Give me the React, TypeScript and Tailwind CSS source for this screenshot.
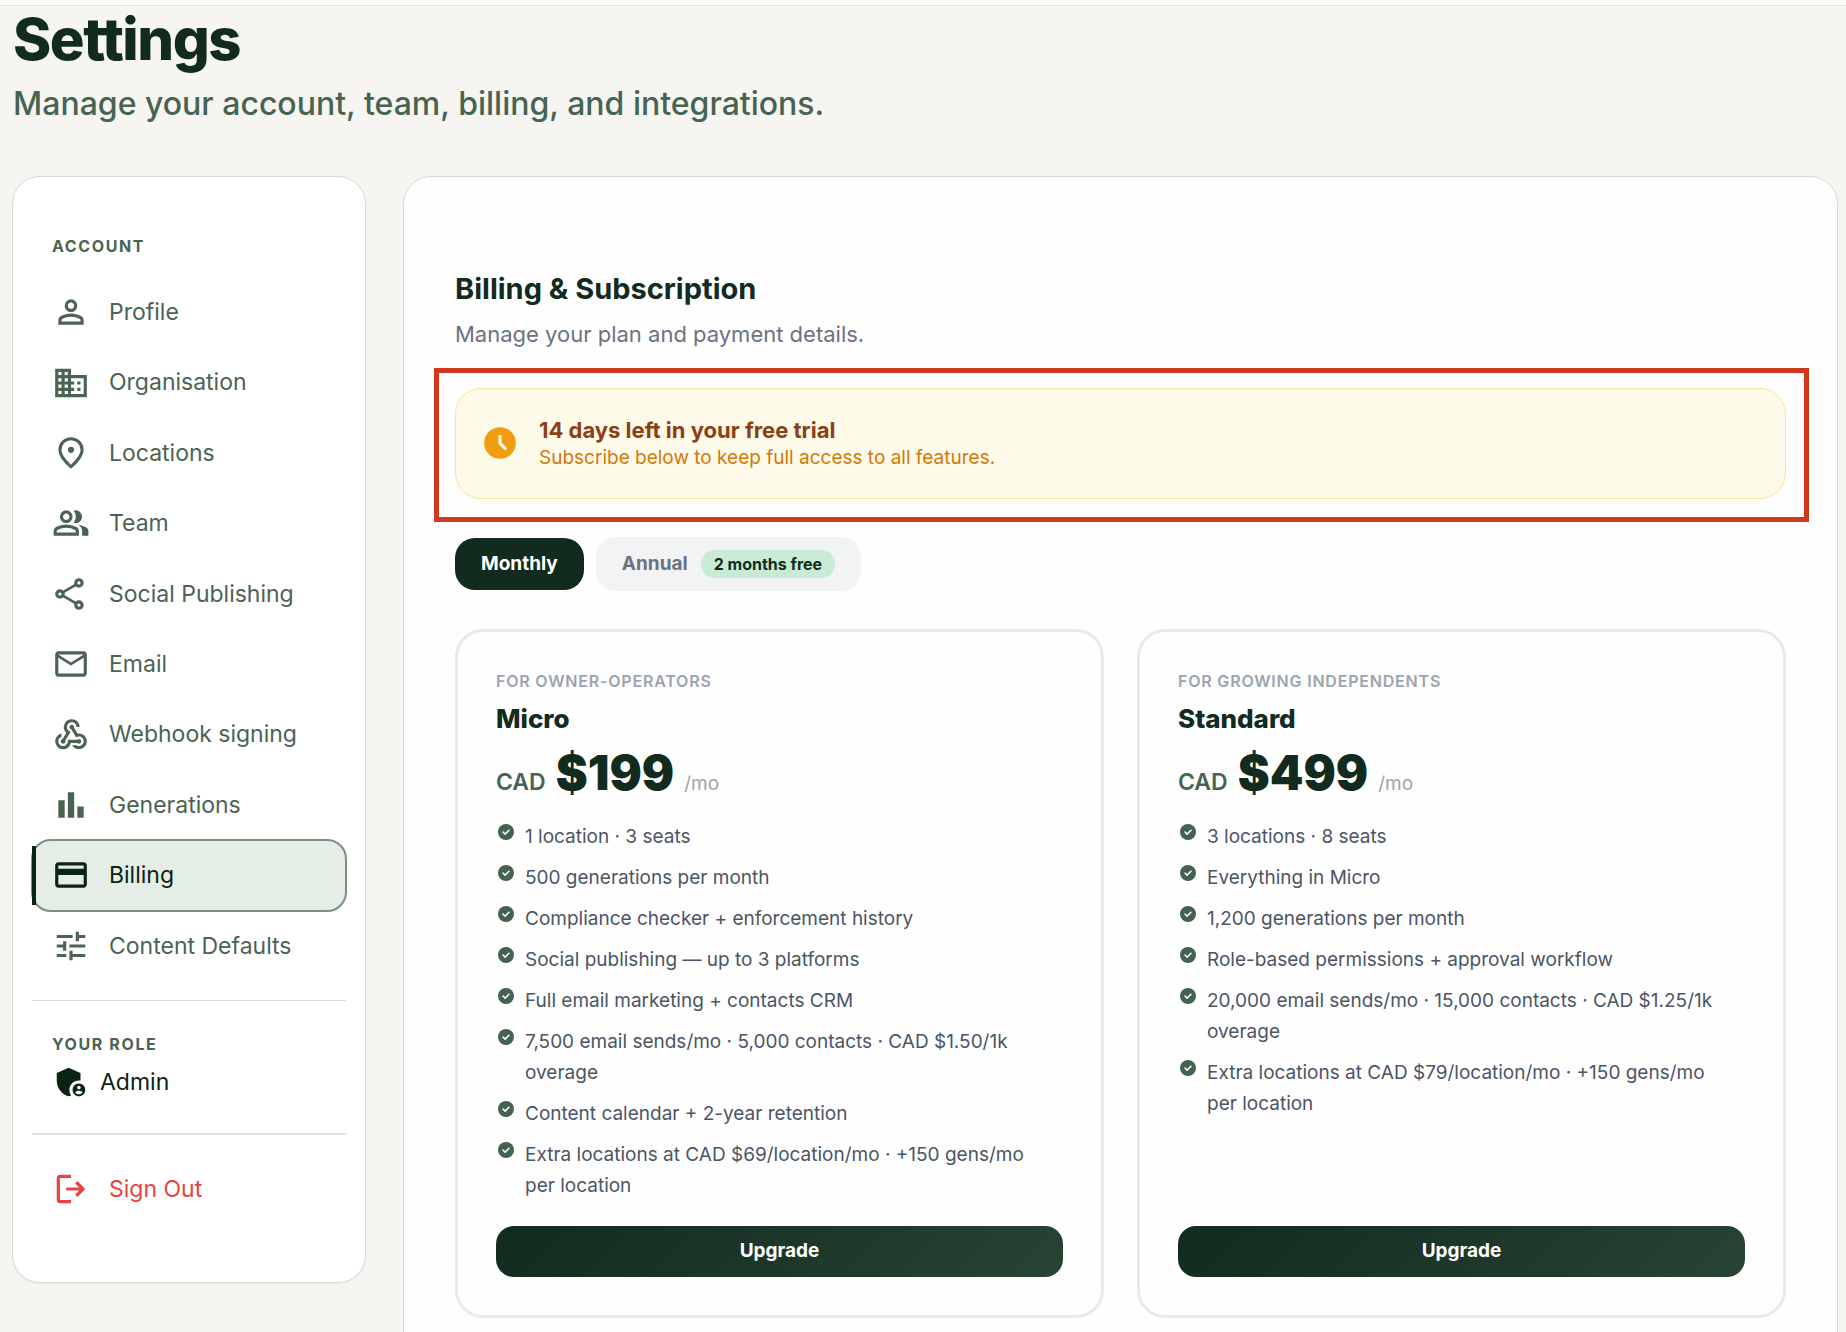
import React from "react";
import {
  MdAdminPanelSettings,
  MdBarChart,
  MdDomain,
  MdMailOutline,
  MdOutlineCreditCard,
  MdTune,
  MdWebhook,
} from "react-icons/md";

type IconProps = { className?: string };

function Glyph({ d, className }: IconProps & { d: string }) {
  return (
    <svg viewBox="0 0 24 24" fill="currentColor" aria-hidden="true" className={className}>
      <path d={d} />
    </svg>
  );
}

const PersonIcon = (p: IconProps) => (
  <Glyph
    {...p}
    d="M12 12q-1.65 0-2.825-1.175T8 8t1.175-2.825T12 4t2.825 1.175T16 8t-1.175 2.825T12 12m-8 8v-2.8q0-.85.438-1.562T5.6 14.55q1.55-.775 3.15-1.162T12 13t3.25.388t3.15 1.162q.725.375 1.163 1.088T20 17.2V20zm2-2h12v-.8q0-.275-.137-.5t-.363-.35q-1.35-.675-2.725-1.012T12 15t-2.775.338T6.5 16.35q-.225.125-.363.35T6 17.2zm6-8q.825 0 1.413-.587T14 8t-.587-1.412T12 6t-1.412.588T10 8t.588 1.413T12 10"
  />
);
const PinIcon = (p: IconProps) => (
  <Glyph
    {...p}
    d="M12 12q.825 0 1.413-.587T14 10t-.587-1.412T12 8t-1.412.588T10 10t.588 1.413T12 12m0 7.35q3.05-2.8 4.525-5.087T18 10.2q0-2.725-1.737-4.462T12 4T7.738 5.738T6 10.2q0 1.775 1.475 4.063T12 19.35M12 22q-4.025-3.425-6.012-6.362T4 10.2q0-3.75 2.413-5.975T12 2t5.588 2.225T20 10.2q0 2.5-1.987 5.438T12 22"
  />
);
const GroupIcon = (p: IconProps) => (
  <Glyph
    {...p}
    d="M1 20v-2.8q0-.85.438-1.562T2.6 14.55q1.55-.775 3.15-1.162T9 13t3.25.388t3.15 1.162q.725.375 1.163 1.088T17 17.2V20zm18 0v-3q0-1.1-.612-2.113T16.65 13.15q1.275.15 2.4.513t2.1.887q.9.5 1.375 1.112T23 17v3zM9 12q-1.65 0-2.825-1.175T5 8t1.175-2.825T9 4t2.825 1.175T13 8t-1.175 2.825T9 12m10-4q0 1.65-1.175 2.825T15 12q-.275 0-.7-.062t-.7-.138q.675-.8 1.038-1.775T15 8t-.362-2.025T13.6 4.2q.35-.125.7-.163T15 4q1.65 0 2.825 1.175T19 8M3 18h12v-.8q0-.275-.137-.5t-.363-.35q-1.35-.675-2.725-1.012T9 15t-2.775.338T3.5 16.35q-.225.125-.363.35T3 17.2zm6-8q.825 0 1.413-.587T11 8t-.587-1.412T9 6t-1.412.588T7 8t.588 1.413T9 10"
  />
);
const LogoutIcon = (p: IconProps) => (
  <Glyph
    {...p}
    d="M5 21q-.825 0-1.412-.587T3 19V5q0-.825.588-1.412T5 3h7v2H5v14h7v2zm11-4l-1.375-1.45l2.55-2.55H9v-2h8.175l-2.55-2.55L16 7l5 5z"
  />
);
const ShareIcon = ({ className }: IconProps) => (
  <svg viewBox="0 0 24 24" fill="none" stroke="currentColor" strokeWidth="2" aria-hidden="true" className={className}>
    <circle cx="17" cy="5" r="2" />
    <circle cx="5" cy="12" r="2" />
    <circle cx="17" cy="19" r="2" />
    <path d="M6.8 11 15.2 6.05M6.8 13l8.4 4.95" strokeWidth="1.7" />
  </svg>
);
const ClockIcon = ({ className }: IconProps) => (
  <svg viewBox="0 0 24 24" aria-hidden="true" className={className}>
    <circle cx="12" cy="12" r="10" fill="currentColor" />
    <path d="M12 7v5.2l3.8 3.8" fill="none" stroke="#fefaea" strokeWidth="2" />
  </svg>
);
const CheckIcon = ({ className }: IconProps) => (
  <svg viewBox="0 0 20 20" aria-hidden="true" className={className}>
    <circle cx="10" cy="10" r="8" fill="currentColor" />
    <path
      d="m7 10 2.1 2.1 3.9-3.8"
      fill="none"
      stroke="#fff"
      strokeWidth="1.5"
      strokeLinecap="round"
      strokeLinejoin="round"
    />
  </svg>
);

const navItems: { label: string; Icon: React.ComponentType<IconProps> }[] = [
  { label: "Profile", Icon: PersonIcon },
  { label: "Organisation", Icon: MdDomain },
  { label: "Locations", Icon: PinIcon },
  { label: "Team", Icon: GroupIcon },
  { label: "Social Publishing", Icon: ShareIcon },
  { label: "Email", Icon: MdMailOutline },
  { label: "Webhook signing", Icon: MdWebhook },
  { label: "Generations", Icon: MdBarChart },
  { label: "Billing", Icon: MdOutlineCreditCard },
  { label: "Content Defaults", Icon: MdTune },
];

const plans = [
  {
    audience: "For owner-operators",
    name: "Micro",
    price: "$199",
    features: [
      "1 location · 3 seats",
      "500 generations per month",
      "Compliance checker + enforcement history",
      "Social publishing — up to 3 platforms",
      "Full email marketing + contacts CRM",
      "7,500 email sends/mo · 5,000 contacts · CAD $1.50/1k overage",
      "Content calendar + 2-year retention",
      "Extra locations at CAD $69/location/mo · +150 gens/mo per location",
    ],
  },
  {
    audience: "For growing independents",
    name: "Standard",
    price: "$499",
    features: [
      "3 locations · 8 seats",
      "Everything in Micro",
      "1,200 generations per month",
      "Role-based permissions + approval workflow",
      "20,000 email sends/mo · 15,000 contacts · CAD $1.25/1k overage",
      "Extra locations at CAD $79/location/mo · +150 gens/mo per location",
    ],
  },
];

function Sidebar() {
  return (
    <aside className="w-[354px] shrink-0 rounded-[28px] border border-[#d8dad6] bg-white px-[19px] pt-[53px] pb-[58px] shadow-xs">
      <h2 className="pl-5 text-base leading-8 font-bold tracking-widest text-[#4b6352] uppercase">Account</h2>
      <nav className="mt-[15px] grid min-h-[704px] auto-rows-fr">
        {navItems.map(({ label, Icon }) => {
          const active = label === "Billing";
          return (
            <a
              key={label}
              href="#"
              aria-current={active ? "page" : undefined}
              className={
                active
                  ? "relative -m-px flex items-center gap-[19px] rounded-[20px] border-2 border-[#7c8f81] bg-[#e4eee6] pl-[19px] text-[23px] text-[#0a2414]"
                  : "flex items-center gap-[19px] pl-5 text-[23px] text-[#4b6352]"
              }
            >
              {active && <span className="absolute inset-y-[5px] -left-px w-1 bg-[#0a2414]" />}
              <Icon className="size-[38px]" />
              {label}
            </a>
          );
        })}
      </nav>
      <section className="mt-[19px] border-y border-t-[#d6dfdb] border-b-[#dbe3dc] border-b-2 pt-[27px] pb-8 pl-5">
        <h2 className="text-base leading-8 font-bold tracking-widest text-[#4b6352] uppercase">Your role</h2>
        <p className="mt-[3px] flex items-center gap-[10px] text-[23px] text-[#0a2414]">
          <MdAdminPanelSettings className="size-[38px]" />
          Admin
        </p>
      </section>
      <button
        type="button"
        className="mt-[19px] flex h-[70px] w-full items-center gap-[19px] pl-5 text-[23px] text-[#e94242]"
      >
        <LogoutIcon className="size-[38px]" />
        Sign Out
      </button>
    </aside>
  );
}

function PlanCard({ plan }: { plan: (typeof plans)[number] }) {
  return (
    <article className="flex flex-col rounded-[28px] border-3 border-[#e8e9e9] px-[38px] pt-[37px] pb-[38px]">
      <p className="text-base leading-6 font-semibold tracking-wider text-[#9ca3b0] uppercase">{plan.audience}</p>
      <h3 className="mt-[10px] text-[26px] leading-8 font-extrabold text-[#112b1f]">{plan.name}</h3>
      <p className="mt-2 flex items-baseline gap-[10px] leading-[60px]">
        <span className="text-[23px] font-semibold text-[#466450]">CAD</span>
        <span className="text-5xl leading-[60px] font-black text-[#112b1f]">{plan.price}</span>
        <span className="text-[19px] text-[#9ca3b0]">/mo</span>
      </p>
      <ul className="mt-[7px] mb-[25px] flex flex-1 flex-col gap-[10px]">
        {plan.features.map((f) => (
          <li key={f} className="flex items-start gap-[9px] pr-2 text-[19px] leading-[31px] text-[#4b5565]">
            <CheckIcon className="mt-px size-5 shrink-0 text-[#436350]" />
            {f}
          </li>
        ))}
      </ul>
      <button
        type="button"
        className="h-[51px] rounded-[18px] bg-linear-135 from-[#112b1f] to-[#284434] text-[19px] font-bold text-white"
      >
        Upgrade
      </button>
    </article>
  );
}

export default function App() {
  return (
    <div className="min-h-screen bg-[#f6f5f2] font-['Inter',sans-serif]">
      <div className="h-[6px] border-b border-[#e3e4e1] bg-white" />
      <header className="px-[13px]">
        <h1 className="text-[58px] leading-[66px] font-extrabold tracking-tight text-[#112b1f]">Settings</h1>
        <p className="text-[32px] leading-[64px] font-medium text-[#466450]">
          Manage your account, team, billing, and integrations.
        </p>
      </header>
      <div className="mt-10 flex items-start gap-[37px] pr-2 pl-3">
        <Sidebar />
        <main className="min-w-0 flex-1 rounded-[28px] border border-[#d8dad6] bg-[#fefefe] px-[51px] pt-[92px] pb-13 shadow-xs">
          <h2 className="text-[29px] leading-10 font-bold text-[#112b1f]">Billing &amp; Subscription</h2>
          <p className="mt-[7px] text-[22px] leading-9 text-[#6b7280]">Manage your plan and payment details.</p>
          <div className="relative mt-9 flex items-center gap-5 rounded-[26px] border border-[#f9e596] bg-[#fefaea] px-[25px] pt-[26px] pb-[27px]">
            <div className="pointer-events-none absolute -top-[21px] -right-6 -bottom-6 -left-[22px] border-[5px] border-[#d13820]" />
            <ClockIcon className="size-[38px] text-[#f09e10]" />
            <div>
              <p className="text-[22px] leading-[30px] font-bold text-[#8c3f12]">14 days left in your free trial</p>
              <p className="text-[19px] leading-[26px] text-[#d47808]">
                Subscribe below to keep full access to all features.
              </p>
            </div>
          </div>
          <div className="mt-[38px] flex items-center gap-3 text-[19px] font-bold">
            <button type="button" aria-pressed="true" className="h-13 rounded-[20px] bg-[#112b1f] px-[26px] text-white">
              Monthly
            </button>
            <button
              type="button"
              aria-pressed="false"
              className="flex h-[54px] items-center gap-[13px] rounded-[20px] bg-[#f2f3f5] px-[26px] text-[#6b7280]"
            >
              Annual
              <span className="rounded-full bg-[#c8ebd5] px-[13px] text-base leading-7 text-[#112b1f]">2 months free</span>
            </button>
          </div>
          <div className="mt-[38px] grid grid-cols-2 gap-[33px]">
            {plans.map((plan) => (
              <PlanCard key={plan.name} plan={plan} />
            ))}
          </div>
        </main>
      </div>
    </div>
  );
}
